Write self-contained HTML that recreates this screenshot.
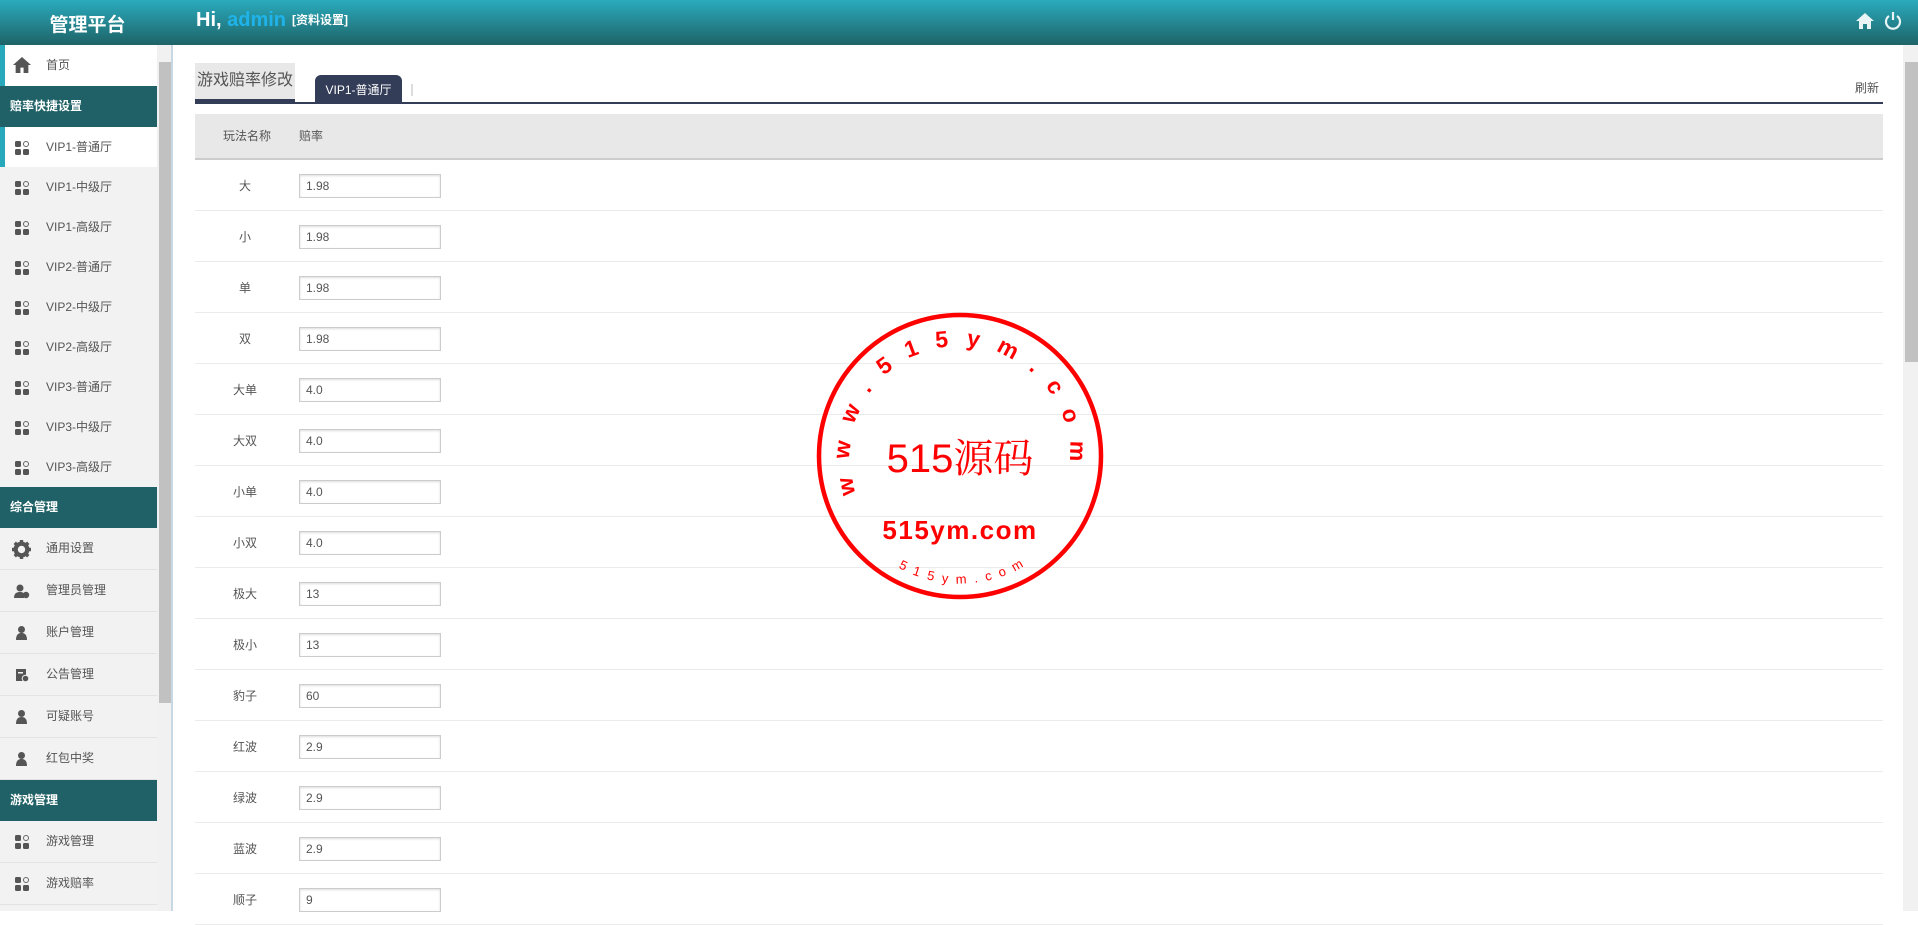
<!DOCTYPE html>
<html><head><meta charset="utf-8"><style>
*{margin:0;padding:0;box-sizing:border-box}
body{width:1918px;height:911px;overflow:hidden;background:#fff;font-family:"Liberation Sans","Noto Sans CJK SC",sans-serif;position:relative}
.hd{position:absolute;left:0;top:0;width:1918px;height:45px;background:linear-gradient(#2aabbd,#1e6367)}
.logo{position:absolute;left:0;width:175px;top:10px;text-align:center;color:#fff;font-size:19px;font-weight:bold}
.hi{position:absolute;left:196px;top:9px;color:#fff;font-size:20px;font-weight:bold}
.hi b{color:#1fb3ea}
.hi span{font-size:12px;margin-left:6px;vertical-align:2px}
.side{position:absolute;left:0;top:45px;width:157px;height:866px;background:#f2f2f2;overflow:hidden}
.it{height:42px;border-bottom:1px solid #e3e3e3;position:relative;font-size:12px;color:#555;line-height:41px;padding-left:46px}
.it.act{background:#fff;border-left:5px solid #27a9bb;padding-left:41px}
.grp{height:41px;background:#1f6166;color:#fff;font-weight:bold;font-size:12px;line-height:41px;padding-left:10px}
.ic{position:absolute;left:15px;top:14px;width:14px;height:14px}
.act .ic{left:10px}
.ic i{position:absolute;width:6px;height:6px;background:#555;border-radius:1.5px}
svg.s{position:absolute}
.sb{position:absolute;left:157px;top:45px;width:16px;height:866px;background:#f1f1f1;border-right:2px solid #c8d8e2}
.sb div{position:absolute;left:2px;top:17px;width:12px;height:641px;background:#c1c1c1}
.psb{position:absolute;left:1903px;top:45px;width:15px;height:866px;background:#f1f1f1}
.psb div{position:absolute;left:2px;top:17px;width:13px;height:300px;background:#c1c1c1}
.ttl{position:absolute;left:195px;top:63px;width:100px;height:40px;background:#e8e8e8;border-bottom:4px solid #333d58;font-size:16px;color:#555;line-height:36px;padding-left:2px}
.tab{position:absolute;left:315px;top:75px;width:87px;height:28px;background:#333d58;border-radius:6px 6px 0 0;color:#fff;font-size:12px;text-align:center;line-height:30px}
.line{position:absolute;left:195px;top:102px;width:1688px;height:2px;background:#333d58}
.sep{position:absolute;left:411px;top:84px;width:2px;height:12px;background:#ddd}
.ref{position:absolute;left:1855px;top:79px;font-size:12px;color:#555}
.th{position:absolute;left:195px;top:114px;width:1688px;height:46px;background:#e8e8e8;border-bottom:2px solid #ccc;font-size:12px;color:#555;line-height:44px}
.row{position:absolute;left:195px;width:1688px;height:51px;border-bottom:1px solid #ebebeb}
.row .l{position:absolute;left:0;width:100px;text-align:center;top:17px;font-size:12px;color:#555}
.row .v{position:absolute;left:104px;top:14px;width:142px;height:24px;border:1px solid #ccc;box-shadow:inset 0 1px 2px #ddd;font-size:12px;color:#555;line-height:22px;padding-left:6px}
</style></head><body>
<div class="hd"><div class="logo">管理平台</div><div class="hi">Hi, <b>admin</b><span>[资料设置]</span></div>
<svg style="position:absolute;left:1855px;top:12px" width="20" height="18" viewBox="0 0 20 18"><path d="M10 1L1 9h3v8h4v-5h4v5h4V9h3z" fill="#e8f4f5"/></svg>
<svg style="position:absolute;left:1883px;top:11px" width="20" height="20" viewBox="0 0 20 20"><path d="M6 5A7 7 0 1 0 14 5" fill="none" stroke="#e8f4f5" stroke-width="2.2"/><path d="M10 1v8" stroke="#e8f4f5" stroke-width="2.2"/></svg>
</div>
<div class="side">
<div class="it act" style="height:41px;border-bottom:none"><svg class="s" style="left:8px;top:12px" width="18" height="16" viewBox="0 0 17 15"><path d="M8.5 0L0 7.5h2.5V15h4.5v-5h3v5h4.5V7.5H17z" fill="#555"/></svg>首页</div>
<div class="grp">赔率快捷设置</div>
<div class="it act" style="border-bottom:none;height:40px"><span class="ic"><i style="left:0;top:0"></i><i style="left:8px;top:0;background:none;border:1px solid #666;border-radius:50%"></i><i style="left:0;top:8px"></i><i style="left:8px;top:8px"></i></span>VIP1-普通厅</div>
<div class="it" style="height:40px;border:none;line-height:40px"><span class="ic"><i style="left:0;top:0"></i><i style="left:8px;top:0;background:none;border:1px solid #666;border-radius:50%"></i><i style="left:0;top:8px"></i><i style="left:8px;top:8px"></i></span>VIP1-中级厅</div>
<div class="it" style="height:40px;border:none;line-height:40px"><span class="ic"><i style="left:0;top:0"></i><i style="left:8px;top:0;background:none;border:1px solid #666;border-radius:50%"></i><i style="left:0;top:8px"></i><i style="left:8px;top:8px"></i></span>VIP1-高级厅</div>
<div class="it" style="height:40px;border:none;line-height:40px"><span class="ic"><i style="left:0;top:0"></i><i style="left:8px;top:0;background:none;border:1px solid #666;border-radius:50%"></i><i style="left:0;top:8px"></i><i style="left:8px;top:8px"></i></span>VIP2-普通厅</div>
<div class="it" style="height:40px;border:none;line-height:40px"><span class="ic"><i style="left:0;top:0"></i><i style="left:8px;top:0;background:none;border:1px solid #666;border-radius:50%"></i><i style="left:0;top:8px"></i><i style="left:8px;top:8px"></i></span>VIP2-中级厅</div>
<div class="it" style="height:40px;border:none;line-height:40px"><span class="ic"><i style="left:0;top:0"></i><i style="left:8px;top:0;background:none;border:1px solid #666;border-radius:50%"></i><i style="left:0;top:8px"></i><i style="left:8px;top:8px"></i></span>VIP2-高级厅</div>
<div class="it" style="height:40px;border:none;line-height:40px"><span class="ic"><i style="left:0;top:0"></i><i style="left:8px;top:0;background:none;border:1px solid #666;border-radius:50%"></i><i style="left:0;top:8px"></i><i style="left:8px;top:8px"></i></span>VIP3-普通厅</div>
<div class="it" style="height:40px;border:none;line-height:40px"><span class="ic"><i style="left:0;top:0"></i><i style="left:8px;top:0;background:none;border:1px solid #666;border-radius:50%"></i><i style="left:0;top:8px"></i><i style="left:8px;top:8px"></i></span>VIP3-中级厅</div>
<div class="it" style="height:40px;border:none;line-height:40px"><span class="ic"><i style="left:0;top:0"></i><i style="left:8px;top:0;background:none;border:1px solid #666;border-radius:50%"></i><i style="left:0;top:8px"></i><i style="left:8px;top:8px"></i></span>VIP3-高级厅</div>
<div class="grp" style="height:41px">综合管理</div>
<div class="it"><svg class="s" style="left:12px;top:12px" width="19" height="19" viewBox="0 0 18 18"><circle cx="9" cy="9" r="5.5" fill="none" stroke="#555" stroke-width="4"/><path d="M9 0v4M9 14v4M0 9h4M14 9h4M2.6 2.6l3 3M12.4 12.4l3 3M2.6 15.4l3-3M12.4 5.6l3-3" stroke="#555" stroke-width="3.2"/></svg>通用设置</div>
<div class="it"><svg class="s" style="left:14px;top:14px" width="16" height="15" viewBox="0 0 16 15"><circle cx="6" cy="4" r="3.5" fill="#555"/><path d="M0 14c0-5 3-6 6-6s4 1 4 3v3z" fill="#555"/><circle cx="12" cy="11" r="3.2" fill="#555"/></svg>管理员管理</div>
<div class="it"><svg class="s" style="left:16px;top:14px" width="11" height="14" viewBox="0 0 11 14"><circle cx="5.5" cy="3.5" r="3.5" fill="#555"/><path d="M0 14c0-5 2-7 5.5-7S11 9 11 14z" fill="#555"/></svg>账户管理</div>
<div class="it"><svg class="s" style="left:16px;top:15px" width="13" height="13" viewBox="0 0 13 13"><rect width="10" height="12" fill="#555"/><rect x="2" y="3" width="5" height="1.5" fill="#f2f2f2"/><circle cx="9.5" cy="9.5" r="3.3" fill="#555" stroke="#f2f2f2"/></svg>公告管理</div>
<div class="it"><svg class="s" style="left:16px;top:14px" width="11" height="14" viewBox="0 0 11 14"><circle cx="5.5" cy="3.5" r="3.5" fill="#555"/><path d="M0 14c0-5 2-7 5.5-7S11 9 11 14z" fill="#555"/></svg>可疑账号</div>
<div class="it"><svg class="s" style="left:16px;top:14px" width="11" height="14" viewBox="0 0 11 14"><circle cx="5.5" cy="3.5" r="3.5" fill="#555"/><path d="M0 14c0-5 2-7 5.5-7S11 9 11 14z" fill="#555"/></svg>红包中奖</div>
<div class="grp" style="height:41px">游戏管理</div>
<div class="it"><span class="ic"><i style="left:0;top:0"></i><i style="left:8px;top:0;background:none;border:1px solid #666;border-radius:50%"></i><i style="left:0;top:8px"></i><i style="left:8px;top:8px"></i></span>游戏管理</div>
<div class="it"><span class="ic"><i style="left:0;top:0"></i><i style="left:8px;top:0;background:none;border:1px solid #666;border-radius:50%"></i><i style="left:0;top:8px"></i><i style="left:8px;top:8px"></i></span>游戏赔率</div>
</div>
<div class="sb"><div></div></div>
<div class="psb"><div></div></div>
<div class="ttl">游戏赔率修改</div>
<div class="tab">VIP1-普通厅</div>
<div class="sep"></div>
<div class="line"></div>
<div class="ref">刷新</div>
<div class="th"><span style="position:absolute;left:28px">玩法名称</span><span style="position:absolute;left:104px">赔率</span></div>
<div class="row" style="top:160px"><div class="l">大</div><div class="v">1.98</div></div>
<div class="row" style="top:211px"><div class="l">小</div><div class="v">1.98</div></div>
<div class="row" style="top:262px"><div class="l">单</div><div class="v">1.98</div></div>
<div class="row" style="top:313px"><div class="l">双</div><div class="v">1.98</div></div>
<div class="row" style="top:364px"><div class="l">大单</div><div class="v">4.0</div></div>
<div class="row" style="top:415px"><div class="l">大双</div><div class="v">4.0</div></div>
<div class="row" style="top:466px"><div class="l">小单</div><div class="v">4.0</div></div>
<div class="row" style="top:517px"><div class="l">小双</div><div class="v">4.0</div></div>
<div class="row" style="top:568px"><div class="l">极大</div><div class="v">13</div></div>
<div class="row" style="top:619px"><div class="l">极小</div><div class="v">13</div></div>
<div class="row" style="top:670px"><div class="l">豹子</div><div class="v">60</div></div>
<div class="row" style="top:721px"><div class="l">红波</div><div class="v">2.9</div></div>
<div class="row" style="top:772px"><div class="l">绿波</div><div class="v">2.9</div></div>
<div class="row" style="top:823px"><div class="l">蓝波</div><div class="v">2.9</div></div>
<div class="row" style="top:874px"><div class="l">顺子</div><div class="v">9</div></div>
<svg style="position:absolute;left:810px;top:306px" width="300" height="300" viewBox="0 0 300 300">
<circle cx="150" cy="150" r="141" fill="none" stroke="#f00" stroke-width="4.5"/>
<defs><path id="ta" d="M46.6 187.6A110 110 0 1 1 259.6 159.6"/><path id="tb" d="M40 214A127 127 0 0 0 260 214"/></defs>
<text font-family="Liberation Sans,sans-serif" font-size="23" font-weight="bold" fill="#f00" letter-spacing="17"><textPath href="#ta">www.515ym.com</textPath></text>
<text font-family="Liberation Sans,sans-serif" font-size="13" fill="#f00" letter-spacing="8" text-anchor="middle"><textPath href="#tb" startOffset="52%">515ym.com</textPath></text>
<text x="150" y="166" text-anchor="middle" font-family="Liberation Sans,'Noto Serif CJK SC',serif" font-size="40" fill="#f00">515源码</text>
<text x="150" y="233" text-anchor="middle" font-family="Liberation Sans,sans-serif" font-size="26" font-weight="bold" letter-spacing="1.5" fill="#f00">515ym.com</text>
</svg>
</body></html>
